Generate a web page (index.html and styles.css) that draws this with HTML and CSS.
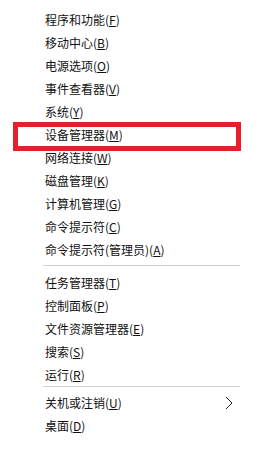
FILE: index.html
```html
<html>
  <head>
    <title>Win+X</title>
    <link rel="stylesheet" href="styles.css">
  </head>
  <body>
    <div class="menu">
      <div class="item">程序和功能(<u>F</u>)</div>
      <div class="item">移动中心(<u>B</u>)</div>
      <div class="item">电源选项(<u>O</u>)</div>
      <div class="item">事件查看器(<u>V</u>)</div>
      <div class="item">系统(<u>Y</u>)</div>
      <div class="item marked">设备管理器(<u>M</u>)</div>
      <div class="item">网络连接(<u>W</u>)</div>
      <div class="item">磁盘管理(<u>K</u>)</div>
      <div class="item">计算机管理(<u>G</u>)</div>
      <div class="item">命令提示符(<u>C</u>)</div>
      <div class="item">命令提示符(管理员)(<u>A</u>)</div>
      <div class="sep"></div>
      <div class="item">任务管理器(<u>T</u>)</div>
      <div class="item">控制面板(<u>P</u>)</div>
      <div class="item">文件资源管理器(<u>E</u>)</div>
      <div class="item">搜索(<u>S</u>)</div>
      <div class="item">运行(<u>R</u>)</div>
      <div class="sep last"></div>
      <div class="item">关机或注销(<u>U</u>)
        <svg class="arrow" width="8" height="14" viewBox="0 0 8 14">
          <polyline points="1,1 7,7 1,13" fill="none" stroke="#222" stroke-width="1"/>
        </svg>
      </div>
      <div class="item">桌面(<u>D</u>)</div>
    </div>
  </body>
</html>
```

FILE: styles.css
```css
body {
  margin: 0;
  background: #fff;
  font-family: "Noto Sans CJK SC", "Liberation Sans", sans-serif;
  font-size: 12px;
  color: #111;
}

.menu {
  width: 240px;
  padding-top: 8px;
}

.item {
  position: relative;
  display: flex;
  align-items: center;
  height: 23px;
  padding-left: 45px;
  white-space: nowrap;
}

.item u {
  text-underline-offset: 1px;
}

.sep {
  height: 1px;
  background: #d0d0d0;
  margin: 4px 0 5px 43px;
}

.sep.last {
  margin-top: 0;
  margin-bottom: 4px;
}

.arrow {
  position: absolute;
  left: 225px;
  top: 5px;
}

/* red annotation box */
.marked::after {
  content: "";
  position: absolute;
  left: 13px;
  top: -1px;
  width: 218px;
  height: 19px;
  border: 5px solid #e3202b;
}
```
